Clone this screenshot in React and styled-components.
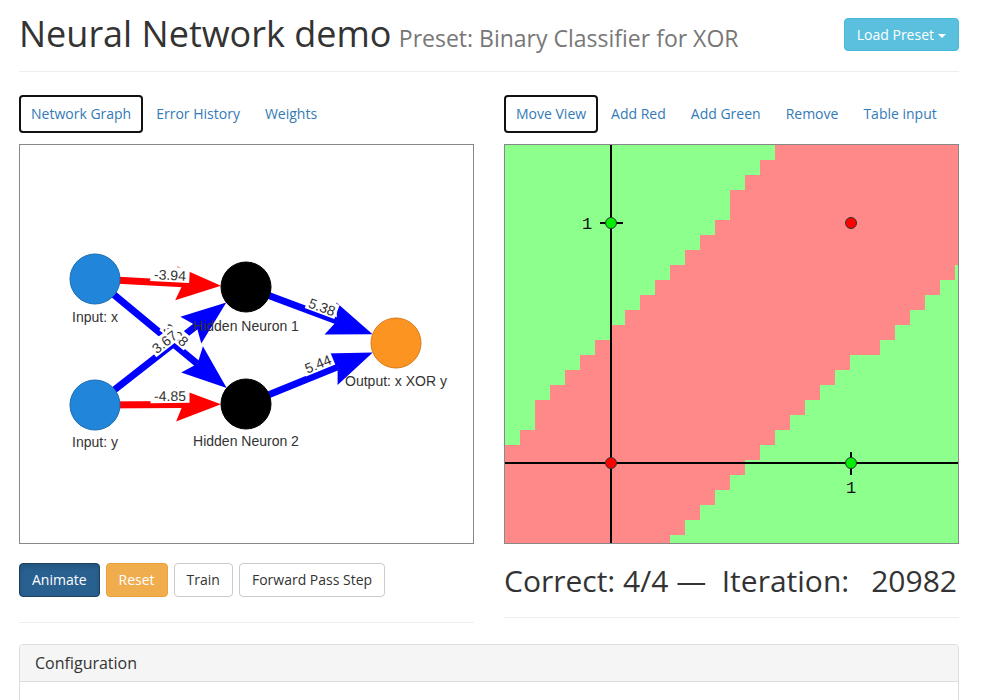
import React from 'react';
import styled, { createGlobalStyle } from 'styled-components';

const GlobalStyle = createGlobalStyle`
  html, body {
    margin: 0;
    overflow: hidden;
  }
  body {
    font-family: "Open Sans", "Liberation Sans", sans-serif;
    font-size: 14px;
    color: #333;
    background: #fff;
  }
`;

const Page = styled.div`
  width: 940px;
  margin-left: 19px;
`;

const Header = styled.div`
  display: flex;
  justify-content: space-between;
  align-items: flex-start;
  padding: 14px 0 13px;
  border-bottom: 1px solid #eee;
`;

const Title = styled.h1`
  margin: 0;
  font-size: 36px;
  font-weight: 400;
  line-height: 40px;
  color: #333;
`;

const Sub = styled.small`
  font-size: 23px;
  color: #777;
  margin-left: -2px;
`;

const Caret = styled.span`
  display: inline-block;
  width: 0;
  height: 0;
  margin-left: 4px;
  vertical-align: middle;
  border-top: 4px solid #fff;
  border-left: 4px solid transparent;
  border-right: 4px solid transparent;
`;

const Row = styled.div`
  display: grid;
  grid-template-columns: 455px 455px;
  column-gap: 30px;
  margin-top: 23px;
`;

const Col = styled.div`
  display: flex;
  flex-direction: column;
`;

const Nav = styled.div`
  display: flex;
  gap: 1px;
  margin-bottom: 11px;
`;

const Tab = styled.a`
  padding: 8px 10px;
  line-height: 18px;
  border: 2px solid ${(p) => (p.$active ? '#111' : 'transparent')};
  border-radius: 4px;
  color: #337ab7;
  text-decoration: none;
  font-size: 14px;
  cursor: pointer;
`;

const Canvas = styled.div`
  height: 400px;
  border: 1px solid #888;
  box-sizing: border-box;
  overflow: hidden;

  svg {
    display: block;
  }
`;

const Buttons = styled.div`
  display: flex;
  gap: 6px;
  margin-top: 19px;
`;

const variants = {
  primary: { bg: '#286090', border: '#1d3f5e', color: '#fff' },
  warning: { bg: '#f0ad4e', border: '#eea236', color: '#fff' },
  info: { bg: '#5bc0de', border: '#46b8da', color: '#fff' },
  default: { bg: '#fff', border: '#ccc', color: '#333' },
};

const Button = styled.button`
  font-family: inherit;
  font-size: 14px;
  line-height: 20px;
  padding: 6px 12px;
  border-radius: 4px;
  border: 1px solid ${(p) => variants[p.$variant].border};
  background: ${(p) => variants[p.$variant].bg};
  color: ${(p) => variants[p.$variant].color};
  box-shadow: ${(p) => (p.$pressed ? 'inset 0 3px 5px rgba(0,0,0,.125)' : 'none')};
  cursor: pointer;
`;

const HeaderButton = styled(Button)`
  margin-top: 4px;
  padding: 6px 12px 5px;
`;

const Rule = styled.hr`
  margin: ${(p) => p.$margin};
  border: 0;
  border-top: 1px solid #eee;
  width: 100%;
`;

const Stats = styled.div`
  display: flex;
  justify-content: space-between;
  margin-top: 20px;
  font-size: 30px;
  line-height: 33px;
  color: #333;
  padding-right: 2px;
`;

const Panel = styled.div`
  margin-top: 1px;
  border: 1px solid #ddd;
  border-radius: 4px;
`;

const PanelHeading = styled.div`
  padding: 9px 15px;
  font-size: 16px;
  line-height: 18px;
  background: #f5f5f5;
  border-bottom: 1px solid #ddd;
  border-radius: 3px 3px 0 0;
`;

const PanelBody = styled.div`
  height: 120px;
`;

/* ---------- network graph ---------- */

const nodes = {
  x: { x: 75, y: 134, fill: '#2185d9', stroke: '#1b6db3', label: 'Input: x', lx: 75, ly: 177 },
  y: { x: 75, y: 260, fill: '#2185d9', stroke: '#1b6db3', label: 'Input: y', lx: 75, ly: 302 },
  h1: { x: 226, y: 142, fill: '#000', stroke: '#000', label: 'Hidden Neuron 1', lx: 226, ly: 186 },
  h2: { x: 226, y: 259, fill: '#000', stroke: '#000', label: 'Hidden Neuron 2', lx: 226, ly: 301 },
  out: { x: 376, y: 198, fill: '#fb9421', stroke: '#d9791a', label: 'Output: x XOR y', lx: 376, ly: 241 },
};

const edges = [
  { from: 'x', to: 'h2', color: '#0000ff', text: '3.68', lx: 156, ly: 190 },
  { from: 'y', to: 'h1', color: '#0000ff', text: '3.67', lx: 144.5, ly: 197 },
  { from: 'x', to: 'h1', color: '#ff0000', text: '-3.94', lx: 150, ly: 130 },
  { from: 'y', to: 'h2', color: '#ff0000', text: '-4.85', lx: 150, ly: 251 },
  { from: 'h1', to: 'out', color: '#0000ff', text: '5.38', lx: 302, ly: 162 },
  { from: 'h2', to: 'out', color: '#0000ff', text: '5.44', lx: 298, ly: 219 },
];

function edgeGeometry(a, b) {
  const dx = b.x - a.x;
  const dy = b.y - a.y;
  const len = Math.hypot(dx, dy);
  const ux = dx / len;
  const uy = dy / len;
  const nx = -uy;
  const ny = ux;
  const tip = { x: b.x - ux * 25, y: b.y - uy * 25 };
  const base = { x: tip.x - ux * 45, y: tip.y - uy * 45 };
  const notch = { x: tip.x - ux * 38, y: tip.y - uy * 38 };
  const pts = [
    tip,
    { x: base.x + nx * 17, y: base.y + ny * 17 },
    notch,
    { x: base.x - nx * 17, y: base.y - ny * 17 },
  ];
  return {
    line: { x1: a.x, y1: a.y, x2: notch.x, y2: notch.y },
    head: pts.map((p) => `${p.x.toFixed(1)},${p.y.toFixed(1)}`).join(' '),
    angle: (Math.atan2(dy, dx) * 180) / Math.PI,
  };
}

function EdgeLabel({ x, y, angle, text }) {
  const w = text.length * 7.4 + 2;
  return (
    <g transform={`translate(${x} ${y}) rotate(${angle})`}>
      <rect x={-w / 2} y={-8} width={w} height={15} fill="#fff" />
      <text
        x={0}
        y={5}
        textAnchor="middle"
        fontFamily="'Liberation Sans', Arial, sans-serif"
        fontSize="14"
        fill="#333"
      >
        {text}
      </text>
    </g>
  );
}

function NetworkGraph() {
  const geo = edges.map((e) => ({ ...e, ...edgeGeometry(nodes[e.from], nodes[e.to]) }));
  return (
    <svg width="453" height="398" viewBox="0 0 453 398">
      {geo.map((e) => (
        <g key={e.text}>
          <line {...e.line} stroke={e.color} strokeWidth="7" />
          <polygon points={e.head} fill={e.color} />
        </g>
      ))}
      {geo.map((e) => (
        <EdgeLabel key={e.text} x={e.lx} y={e.ly} angle={e.angle} text={e.text} />
      ))}
      {Object.values(nodes).map((n) => (
        <circle key={n.label} cx={n.x} cy={n.y} r="25" fill={n.fill} stroke={n.stroke} strokeWidth="1" />
      ))}
      {Object.values(nodes).map((n) => (
        <text
          key={n.label}
          x={n.lx}
          y={n.ly}
          textAnchor="middle"
          fontFamily="'Liberation Sans', Arial, sans-serif"
          fontSize="14"
          fill="#333"
        >
          {n.label}
        </text>
      ))}
    </svg>
  );
}

/* ---------- decision plot ---------- */

const CELL = 15;
const redStart = [18, 17, 16, 15, 15, 14, 13, 12, 11, 10, 9, 8, 7, 6, 5, 4, 3, 2, 2, 1, 0, 0, 0, 0, 0, 0, 0];
const greenStart = [31, 31, 31, 31, 31, 31, 31, 31, 30, 29, 28, 27, 26, 25, 23, 22, 21, 20, 19, 18, 17, 16, 15, 14, 13, 12, 11];

const OX = 106;
const OY = 318;
const UNIT = 240;

const points = [
  { x: 0, y: 0, color: '#ff0000' },
  { x: 1, y: 1, color: '#ff0000' },
  { x: 0, y: 1, color: '#00ee00' },
  { x: 1, y: 0, color: '#00ee00' },
];

function DecisionPlot() {
  return (
    <svg width="454" height="398" viewBox="0 0 454 398">
      <rect width="454" height="398" fill="#8cff8c" />
      {redStart.map((s, r) => (
        <rect
          key={r}
          x={s * CELL}
          y={r * CELL}
          width={(greenStart[r] - s) * CELL}
          height={CELL}
          fill="#ff8888"
        />
      ))}
      <line x1={OX} y1="0" x2={OX} y2="398" stroke="#000" strokeWidth="2" />
      <line x1="0" y1={OY} x2="454" y2={OY} stroke="#000" strokeWidth="2" />
      <line x1={OX - 11} y1={OY - UNIT} x2={OX + 12} y2={OY - UNIT} stroke="#000" strokeWidth="2" />
      <line x1={OX + UNIT} y1={OY - 11} x2={OX + UNIT} y2={OY + 12} stroke="#000" strokeWidth="2" />
      <text x={OX - 24} y={OY - UNIT + 6} textAnchor="middle" fontFamily="'Liberation Mono', monospace" fontSize="17" fill="#111">
        1
      </text>
      <text x={OX + UNIT} y={OY + 30} textAnchor="middle" fontFamily="'Liberation Mono', monospace" fontSize="17" fill="#111">
        1
      </text>
      {points.map((p) => (
        <circle
          key={`${p.x}-${p.y}`}
          cx={OX + p.x * UNIT}
          cy={OY - p.y * UNIT}
          r="5.5"
          fill={p.color}
          stroke="#333"
          strokeWidth="1"
        />
      ))}
    </svg>
  );
}

export default function App() {
  return (
    <Page>
      <GlobalStyle />
      <Header>
        <Title>
          Neural Network demo <Sub>Preset: Binary Classifier for XOR</Sub>
        </Title>
        <HeaderButton $variant="info">
          Load Preset
          <Caret />
        </HeaderButton>
      </Header>

      <Row>
        <Col>
          <Nav>
            <Tab $active>Network Graph</Tab>
            <Tab>Error History</Tab>
            <Tab>Weights</Tab>
          </Nav>
          <Canvas>
            <NetworkGraph />
          </Canvas>
          <Buttons>
            <Button $variant="primary" $pressed>
              Animate
            </Button>
            <Button $variant="warning">Reset</Button>
            <Button $variant="default">Train</Button>
            <Button $variant="default">Forward Pass Step</Button>
          </Buttons>
          <Rule $margin="25px 0 20px" />
        </Col>
        <Col>
          <Nav>
            <Tab $active>Move View</Tab>
            <Tab>Add Red</Tab>
            <Tab>Add Green</Tab>
            <Tab>Remove</Tab>
            <Tab>Table input</Tab>
          </Nav>
          <Canvas>
            <DecisionPlot />
          </Canvas>
          <Stats>
            <span>Correct: 4/4 —&nbsp; Iteration:</span>
            <span>20982</span>
          </Stats>
          <Rule $margin="20px 0 20px" />
        </Col>
      </Row>

      <Panel>
        <PanelHeading>Configuration</PanelHeading>
        <PanelBody />
      </Panel>
    </Page>
  );
}
